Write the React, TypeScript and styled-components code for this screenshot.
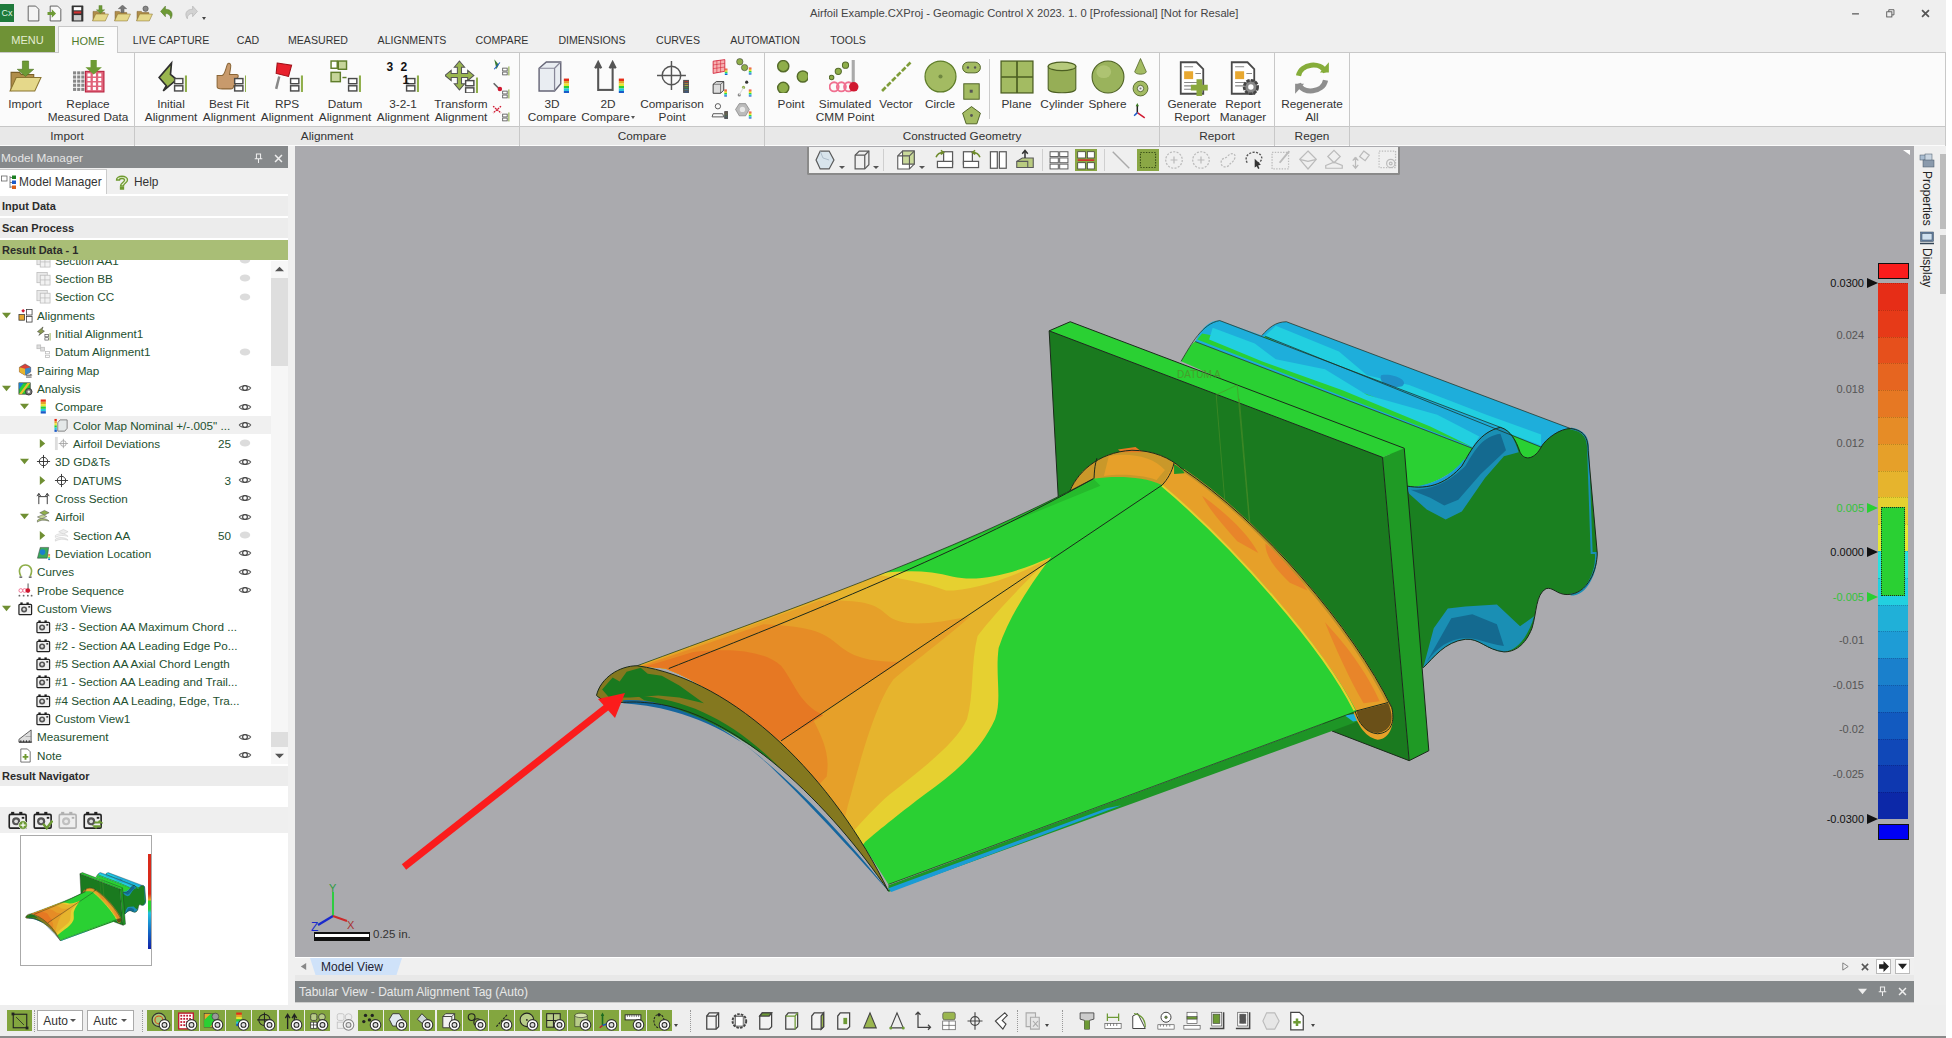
import React from "react";
import styled, { createGlobalStyle } from "styled-components";

const GlobalStyle = createGlobalStyle`
  html, body { margin: 0; padding: 0; background: #fff; }
  body { font-family: "Liberation Sans", Arial, sans-serif; }
`;

const Page = styled.div`
  width: 1946px; height: 1038px; display: flex; flex-direction: column; overflow: hidden;
  background: #efefef; color: #222; font-size: 12px;
`;
/* ---------- title bar ---------- */
const TitleBar = styled.div`
  height: 26px; flex: none; display: grid; grid-template-columns: 810px 1fr auto; align-items: center; background: #efefef;
`;
const Qat = styled.div`display: flex; align-items: center; height: 100%;`;
const QatBtn = styled.span<{ $w: number }>`
  width: ${p => p.$w}px; display: flex; justify-content: center; align-items: center;
`;
const AppLogo = styled.span`
  width: 14px; height: 18px; background: #1f7a3c; color: #dff3e3; font-size: 9px; display: flex;
  align-items: center; justify-content: center; margin-right: 8px;
`;
const TitleText = styled.div`font-size: 11.2px; color: #444; white-space: nowrap;`;
const WinControls = styled.div`display: flex; padding-right: 3px;`;
const WinBtn = styled.span`width: 35px; height: 16px; display: flex; align-items: center; justify-content: center;`;
/* ---------- tabs ---------- */
const TabBar = styled.div`
  height: 26px; flex: none; display: flex; align-items: flex-end; border-bottom: 1px solid #c8c8c8; background: #efefef;
`;
const MenuTab = styled.div`
  width: 55px; height: 26px; background: #6f9236; color: #e4edd2; display: flex; align-items: center;
  justify-content: center; font-size: 11px; margin-right: 3px; padding-top: 1px; box-sizing: border-box;
`;
const HomeTab = styled.div`
  width: 60px; background: #fbfbfb; border: 1px solid #c8c8c8; border-bottom: 0; color: #4f7a2a;
  display: flex; align-items: center; justify-content: center; font-size: 11px; box-sizing: border-box;
  margin-bottom: -1px; height: 27px; padding-top: 1px;
`;
const TabLabel = styled.div<{ $w: number }>`
  width: ${p => p.$w}px; height: 26px; display: flex; align-items: center; justify-content: center; font-size: 10.6px;
  color: #333; white-space: nowrap; padding-top: 2px; box-sizing: border-box;
`;
/* ---------- ribbon ---------- */
const Ribbon = styled.div`
  display: flex; height: 93px; flex: none; background: #fbfbfb; border-right: 1px solid #c8c8c8; box-sizing: border-box;
`;
const RibbonGroup = styled.div<{ $w: number }>`
  width: ${p => p.$w}px; flex: none; display: flex; flex-direction: column; box-sizing: border-box;
  border-right: 1px solid #c8c8c8;
`;
const GroupBody = styled.div<{ $pad?: number }>`
  height: 73px; display: flex; padding-left: ${p => p.$pad ?? 0}px; border-bottom: 1px solid #c6c6c6;
`;
const GroupLabel = styled.div`
  height: 18px; background: #e8e8e8; font-size: 11.8px; color: #333; display: flex; align-items: center; justify-content: center;
`;
const RibbonFill = styled.div`flex: 1; display: flex; flex-direction: column;`;
const FillBody = styled.div`height: 73px; border-bottom: 1px solid #c6c6c6;`;
const FillLabel = styled.div`height: 18px; background: #e8e8e8;`;
const RibbonBtn = styled.div<{ $w: number }>`
  width: ${p => p.$w}px; flex: none; display: flex; flex-direction: column; align-items: center; padding-top: 7px;
  box-sizing: border-box; font-size: 11.8px; line-height: 13px; color: #333;
`;
const BtnIcon = styled.div`height: 38px; display: flex; align-items: flex-start; justify-content: center;`;
const BtnText = styled.div`white-space: nowrap; text-align: center; width: 0; display: flex; flex-direction: column; align-items: center;`;
const Caret = styled.i`
  display: inline-block; width: 0; height: 0; border-left: 2.5px solid transparent; border-right: 2.5px solid transparent;
  border-top: 3px solid #555; margin-left: 1px; vertical-align: middle;
`;
const SmallCol = styled.div<{ $w: number }>`
  width: ${p => p.$w}px; flex: none; display: flex; flex-direction: column; align-items: center; gap: 5px; padding-top: 5px;
`;
const RibbonSep = styled.div`width: 1px; height: 60px; background: #ccc; margin: 6px 4.5px 0 8px; flex: none;`;
/* ---------- main ---------- */
const Main = styled.div`flex: 1; display: flex; min-height: 0;`;
const LeftPanel = styled.div`
  width: 295px; flex: none; display: flex; flex-direction: column; background: #f0f0f0; box-sizing: border-box; padding-right: 7px;
`;
const PanelHead = styled.div`
  height: 22px; flex: none; background: #86898b; color: #e5e5e5; display: flex; align-items: center; padding: 2px 0 0 1px; font-size: 11.8px; box-sizing: border-box;
`;
const PanelHeadTitle = styled.span`flex: 1;`;
const PanelHeadBtn = styled.span`width: 20px; display: flex; justify-content: center;`;
const PanelTabs = styled.div`height: 26px; flex: none; display: flex; align-items: flex-end; background: #f0f0f0;`;
const PanelTabActive = styled.div`
  width: 107px; height: 25px; background: #fff; border: 1px solid #ccc; border-bottom: 0; border-left: 0; box-sizing: border-box;
  display: flex; align-items: center; gap: 2px; padding-left: 1px; font-size: 11.9px; color: #333;
`;
const PanelTab = styled.div`height: 25px; display: flex; align-items: center; gap: 4px; padding-left: 7px; font-size: 11.9px; color: #333;`;
const PanelWhite = styled.div`flex: 1; display: flex; flex-direction: column; background: #fff; min-height: 0;`;
const AccHead = styled.div<{ $on?: boolean }>`
  height: 20px; margin-top: 2px; flex: none; background: ${p => (p.$on ? "#a9be76" : "#ececec")}; font-weight: bold; font-size: 11px;
  display: flex; align-items: center; padding-left: 2px; color: #2b2b2b;
`;
const TreeArea = styled.div`height: 504px; flex: none; display: flex; overflow: hidden;`;
const TreeList = styled.div`flex: 1; min-width: 0; margin-top: -9px;`;
const Row = styled.div<{ $sel?: boolean }>`
  height: 18.33px; display: flex; align-items: center; background: ${p => (p.$sel ? "#f0f0f0" : "transparent")}; color: #24502f;
  font-size: 11.7px; white-space: nowrap;
`;
const Twist = styled.span<{ $left: number }>`
  width: 16px; margin-left: ${p => p.$left}px; flex: none; display: flex; justify-content: center;
`;
const RowIcon = styled.span`width: 18px; flex: none; display: flex; justify-content: center; margin: 0 3px 0 2px;`;
const RowText = styled.span`flex: 1; min-width: 0;`;
const RowCount = styled.span`width: 20px; text-align: right; margin-right: 3px; flex: none;`;
const RowEye = styled.span`width: 22px; display: flex; justify-content: center; flex: none; margin-right: 15px;`;
const Scroll = styled.div`width: 17px; flex: none; display: flex; flex-direction: column; background: #dedede; margin-top: 1px;`;
const ScrollBtn = styled.div`height: 17px; background: #f7f7f7; display: flex; align-items: center; justify-content: center; flex: none;`;
const ScrollTop = styled.div`height: 88px; flex: none;`;
const ScrollThumb = styled.div`flex: 1; background: #f6f6f6;`;
const ScrollEnd = styled.div`height: 15px; flex: none;`;
const NavBar = styled.div`height: 21px; background: #fff; flex: none;`;
const CamBar = styled.div`height: 26px; flex: none; background: #efefef; display: flex; align-items: center; padding-left: 8px; gap: 5px;`;
const ThumbArea = styled.div`flex: 1; padding: 2px 0 0 20px; background: #fff;`;
const Thumb = styled.div`
  width: 132px; height: 131px; border: 1px solid #aaa; box-sizing: border-box; background: #fff; position: relative; overflow: hidden;
`;
const ThumbScale = styled.div`
  position: absolute; right: 0; top: 18px; width: 3px; height: 95px;
  background: linear-gradient(#d92a1a 0 42%, #e6a029 48%, #2ad033 50% 58%, #22c0e0 62%, #1470c8 80%, #1020a8 100%);
`;
const Center = styled.div`width: 1619px; flex: none; display: flex; flex-direction: column;`;
const Viewport = styled.div`flex: 1; position: relative; background: #aaaaae; overflow: hidden; border-bottom: 1px solid #fff;`;
const ModelSvg = styled.svg`position: absolute; left: 0; top: 0; width: 1619px; height: 811px;`;
const ViewBar = styled.div`
  position: absolute; left: 512px; top: 1px; width: 593px; height: 28px; box-sizing: border-box; background: #efefef;
  border: 2px solid #8a8a8a; border-top: 0; border-radius: 0 0 2px 2px; display: flex; align-items: center; padding-left: 3px;
`;
const ViewBtn = styled.span<{ $w: number; $on?: boolean }>`
  width: ${p => p.$w}px; height: 24px; flex: none; display: flex; align-items: center; justify-content: center;
`;
const MiniDrop = styled.span`
  width: 0; height: 0; border-left: 3px solid transparent; border-right: 3px solid transparent; border-top: 3px solid #555; margin-top: 14px;
`;
const ViewSep = styled.span<{ $r?: number }>`width: 1px; height: 22px; background: #cfcfcf; margin: 0 ${p => p.$r ?? 5}px 0 4px; flex: none;`;
const CornerMark = styled.span`
  position: absolute; right: 4px; top: 4px; width: 0; height: 0; border-top: 5px solid #fff; border-left: 7px solid transparent;
`;
const Legend = styled.div`position: absolute; left: 1583px; top: 117px; width: 31px;`;
const LegendCap = styled.div<{ $c: string }>`background: ${p => p.$c}; border: 1px solid #111; box-sizing: border-box; height: 16px;`;
const LegendBands = styled.div`height: 536px; margin: 4px 0 5px; display: flex; flex-direction: column; position: relative; width: 30px;`;
const Band = styled.div<{ $c: string }>`flex: 1; background: ${p => p.$c}; border-top: 1px dotted rgba(0,0,0,.18);`;
const TolBox = styled.div`
  position: absolute; left: 3px; top: 224px; width: 24px; height: 89px; background: #2ad033; border: 1px dotted #222; box-sizing: border-box;
`;
const Tick = styled.div<{ $c: string }>`
  position: absolute; right: 44px; width: 50px; height: 14px; line-height: 14px; margin-top: -7px; text-align: right; font-size: 11px;
  color: ${p => p.$c};
`;
const Pointer = styled.div<{ $c: string }>`
  position: absolute; left: -11px; width: 0; height: 0; margin-top: -5px;
  border-top: 5px solid transparent; border-bottom: 5px solid transparent; border-left: 11px solid ${p => p.$c};
`;
const ScaleLabel = styled.div`position: absolute; left: 78px; top: 782px; font-size: 11.5px; color: #333;`;
const ScaleBar = styled.div`
  position: absolute; left: 19px; top: 786px; width: 56px; height: 9px; box-sizing: border-box;
  border: 1px solid #111; border-width: 2px 1px 4px; background: #fff;
`;
const TabRow = styled.div`height: 17px; flex: none; background: #f0f0f0; display: flex; align-items: center; padding: 0 4px; gap: 4px;`;
const ModelTab = styled.div`
  width: 92px; height: 17px; background: #cfe2f9; clip-path: polygon(0 0, 100% 0, 94% 100%, 6% 100%); box-sizing: border-box; padding-right: 8px;
  margin-left: -2px; display: flex; align-items: center; justify-content: center; font-size: 12px; color: #223;
`;
const TabRowFill = styled.div`flex: 1;`;
const TabRowBtn = styled.span<{ $boxed?: boolean }>`
  width: 15px; height: 15px; display: flex; align-items: center; justify-content: center; color: #555; font-size: 12px; box-sizing: border-box;
  border: ${p => (p.$boxed ? "1px solid #bbb" : "0")}; background: ${p => (p.$boxed ? "#fff" : "transparent")};
`;
const GapRow = styled.div`height: 6px; flex: none; background: #e8e8e8;`;
const TabHead = styled.div`
  height: 22px; flex: none; background: #84888a; color: #e8e8e8; font-size: 12px; display: flex; align-items: center; padding-left: 4px; padding-right: 2px;
  border-bottom: 1px solid #ccc; box-sizing: border-box;
`;
const TabHeadTitle = styled.span`flex: 1;`;
const TabHeadBtn = styled.span`width: 20px; display: flex; justify-content: center;`;
const TabStub = styled.div`height: 2px; flex: none; background: #efefef;`;
const RightRail = styled.div`flex: 1; background: #efefef; position: relative; display: flex; flex-direction: column; padding-top: 7px;`;
const RailItem = styled.div`display: flex; flex-direction: column; align-items: center; width: 26px; margin-bottom: 4px;`;
const RailText = styled.span`writing-mode: vertical-rl; font-size: 12px; color: #222; margin-top: 2px; line-height: 14px;`;
const RailBar = styled.div<{ $top: number; $h: number }>`
  position: absolute; right: 0; top: ${p => p.$top}px; width: 6px; height: ${p => p.$h}px; background: #bdbdbd;
`;
/* ---------- bottom toolbar ---------- */
const BottomBar = styled.div`
  height: 33px; flex: none; background: #eee; border-bottom: 2px solid #8a8a8a; box-sizing: border-box; display: flex; align-items: center; padding-left: 7px;
`;
const SelectBox = styled.div<{ $w: number }>`
  width: ${p => p.$w}px; height: 21px; background: #fff; border: 1px solid #aaa; box-sizing: border-box; font-size: 12px; display: flex;
  align-items: center; padding-left: 5px; color: #333; margin-right: 4px; position: relative; flex: none;
`;
const SelectArrow = styled.span`
  position: absolute; right: 6px; top: 8px; width: 0; height: 0; border-left: 3px solid transparent; border-right: 3px solid transparent; border-top: 3px solid #555;
`;
const GreenTile = styled.span<{ $off?: boolean }>`
  width: 25px; height: 21px; flex: none; margin-right: 1.3px; background: ${p => (p.$off ? "#f0f0f0" : "#83a63f")}; display: flex; align-items: center; justify-content: center;
  position: relative; opacity: ${p => (p.$off ? 0.55 : 1)};
`;
const TileEye = styled.span`position: absolute; right: 1px; bottom: 0; display: flex;`;
const OutlineBtn = styled.span<{ $w: number }>`width: ${p => p.$w}px; flex: none; display: flex; justify-content: center; align-items: center;`;
const BarDots = styled.span<{ $m: number }>`width: 1px; height: 22px; border-left: 1px dotted #999; margin: 0 ${p => p.$m}px; flex: none;`;
const Drop = styled.span`
  width: 0; height: 0; border-left: 2.5px solid transparent; border-right: 2.5px solid transparent; border-top: 3px solid #444; margin: 10px 4px 0 1px; flex: none;
`;
const BarSvg = styled.svg`display: block; flex: none;`;

/* ---------- icon helpers ---------- */
const Ico: React.FC<{ s?: number; vb?: string; children: React.ReactNode }> = ({ s = 16, vb = "0 0 32 32", children }) => (
  <BarSvg width={s} height={s} viewBox={vb}>{children}</BarSvg>
);
const G = "#8fae4a", GD = "#5f7d2a", D = "#4a4a4a", L = "#e9edf2";
const Badge = () => (
  <g fill="#fff" stroke={D} strokeWidth="1.4">
    <rect x="19" y="18" width="8" height="5" /><rect x="19" y="25" width="8" height="5" />
    <rect x="29" y="15" width="2" height="16" fill={G} stroke="none" />
  </g>
);
const Rainbow: React.FC<{ x?: number; y?: number; w?: number; h?: number }> = ({ x = 27, y = 18, w = 5, h = 2.4 }) => (
  <g>{["#e62d17", "#e6a029", "#e8e832", "#2ad033", "#22c8e0", "#1a5ac8"].map((c, i) => <rect key={c} x={x} y={y + i * h} width={w} height={h} fill={c} />)}</g>
);
const Folder = ({ dir = "down" }: { dir?: string }) => (
  <g>
    <path d="M2 12h8l2 2h12v5H8L2 30z" fill="#b08d4a" stroke="#7a5f28" />
    <path d="M7 17h24l-6 13H1z" fill="#e5d88a" stroke="#8a7430" />
    {dir === "down" && <path d="M13 1h6v8h5l-8 7-8-7h5z" fill="#6d9a35" stroke="#4e7322" strokeWidth=".6" />}
    {dir === "up" && <path d="M16 0l8 7h-5v7h-6V7H8z" fill="#777" stroke="#444" strokeWidth=".6" />}
    {dir === "gear" && <circle cx="18" cy="7" r="5" fill="#888" stroke="#444" />}
  </g>
);
const Doc = ({ c = "#fff" }: { c?: string }) => <path d="M6 2h14l6 6v22H6z" fill={c} stroke={D} strokeWidth="1.6" />;
const EyeOn = () => (
  <Ico s={14}><path d="M3 16c4-7 22-7 26 0-4 7-22 7-26 0z" fill="#eee" stroke="#555" strokeWidth="2.4" /><circle cx="16" cy="16" r="5.4" fill="#fff" stroke="#444" strokeWidth="2.6" /></Ico>
);
const EyeOff = () => <Ico s={14}><ellipse cx="16" cy="16" rx="12" ry="8" fill="#dcdcdc" /></Ico>;
const TileEyeIco = () => (
  <Ico s={13}><circle cx="16" cy="17" r="13" fill="#fff" stroke="#333" strokeWidth="2.6" /><circle cx="16" cy="17" r="6" fill="#ddd" stroke="#222" strokeWidth="2.6" /></Ico>
);
const Twisty: React.FC<{ open?: boolean }> = ({ open }) => (
  <Ico s={9} vb="0 0 10 10">{open ? <path d="M0 2h10L5 8z" fill="#6f8f33" /> : <path d="M2 0l6 5-6 5z" fill="#6f8f33" />}</Ico>
);
const Cam = ({ op = 1 }: { op?: number }) => (
  <g opacity={op}><rect x="2" y="7" width="27" height="22" rx="2" fill="#eee" stroke="#222" strokeWidth="2.6" /><rect x="5" y="3" width="5" height="4" fill="#222" /><rect x="18" y="3" width="5" height="4" fill="#222" /><circle cx="13" cy="18" r="6.5" fill="#555" /><circle cx="13" cy="18" r="3" fill="#ddd" /><rect x="22" y="11" width="4" height="3" fill="#222" /></g>
);
const SectionGrid = () => (<g fill="#e9e9e9" stroke="#bbb" strokeWidth="1.6"><rect x="2" y="3" width="22" height="22" /><rect x="9" y="9" width="21" height="21" fill="#f2f2f2" /><path d="M19 9v21M9 19h21" /></g>);

const icons: Record<string, React.ReactNode> = {
  importI: <Folder />,
  replace: <g><g fill="#888">{[0, 1, 2, 3, 4].map(r => [0, 1, 2].map(c => <rect key={`${r}${c}`} x={1 + c * 4} y={11 + r * 4} width="3" height="3" />))}</g><rect x="13" y="11" width="18" height="20" fill="#e0637a" stroke="#b81f3c" /><g fill="#fff">{[0, 1, 2, 3].map(r => [0, 1, 2].map(c => <rect key={`${r}${c}`} x={15 + c * 5.2} y={13 + r * 4.4} width="3" height="3" />))}</g><path d="M18 0h6v7h5l-8 7-8-7h5z" fill="#6d9a35" /></g>,
  initial: <g><path d="M16 3L4 17l7 8-3 5 13-11-6-5z" fill="#9ab64f" stroke="#2f2f2f" strokeWidth="1.6" /><Badge /></g>,
  bestfit: <g><path d="M4 15h5c3-2 3-6 5-11 2-2 4 0 3 4l-1 6h7c2 0 2 3 0 4 1 1 1 3-1 4 0 2-1 3-2 3 0 2-1 3-3 3H9c-3 0-5 0-5-2z" fill="#c89a6c" stroke="#8a6536" strokeWidth="1" /><g transform="translate(2,0)"><Badge /></g></g>,
  rps: <g><path d="M6 3l14 2-3 11-12-3z" fill="#e8202c" stroke="#a01018" /><path d="M8 16l-3 12" stroke="#888" strokeWidth="2.4" /><Badge /></g>,
  datum: <g fill="#c6d59a" stroke={GD} strokeWidth="1.4"><rect x="9" y="1" width="8" height="8" /><rect x="2" y="1" width="6" height="7" fill="#fff" /><rect x="2" y="12" width="9" height="9" /><path d="M13 17h4" fill="none" /><Badge /></g>,
  three21: <g><Badge /></g>,
  transform: <g><path d="M14 1l5 6h-3v6h6v-3l6 5-6 5v-3h-6v6h3l-5 6-5-6h3v-6H6v3L0 15l6-5v3h6V7H9z" fill="#9ab64f" stroke="#555" strokeWidth="1" /><g transform="translate(1,2)"><Badge /></g></g>,
  comp3d: <g><path d="M3 8l7-6h14v21l-6 7H3z" fill={L} stroke="#667" strokeWidth="1.4" /><path d="M3 8h15v22M18 8l6-6" fill="none" stroke="#889" strokeWidth="1.2" /><Rainbow /></g>,
  comp2d: <g><path d="M6 30V4m-3 4l3-6 3 6M20 30V4m-3 4l3-6 3 6" stroke="#555" strokeWidth="2" fill="#555" /><path d="M6 29h14" stroke="#555" strokeWidth="2" /><Rainbow x={26} /></g>,
  compPt: <g fill="none" stroke="#555" strokeWidth="1.4"><circle cx="15" cy="15" r="9" /><path d="M15 1v28M1 15h28M15 11v8M11 15h8" /><Rainbow x={27} y={20} w={5} h={2} /></g>,
  point: <g fill="#8fae4a" stroke="#556b2a" strokeWidth="1.4"><circle cx="8" cy="6" r="5.4" /><circle cx="27" cy="16" r="5.4" /><circle cx="8" cy="27" r="5.4" /></g>,
  cmm: <g><g fill={G} stroke="#556b2a"><circle cx="16" cy="5" r="3" /><circle cx="9" cy="11" r="3" /><circle cx="2.5" cy="17" r="2.2" /></g><rect x="22" y="0" width="3" height="24" fill="#aaa" /><g fill="none" stroke="#f07090" strokeWidth="1.8"><circle cx="5" cy="26" r="4.4" /><circle cx="12" cy="26" r="4.4" /><circle cx="19" cy="26" r="4.4" /></g><circle cx="24" cy="26" r="4.6" fill="#d01830" /></g>,
  vector: <path d="M2 30L30 2" stroke="#7f9d3a" strokeWidth="2.6" strokeDasharray="5 1.8" />,
  circleI: <g><circle cx="16" cy="16" r="15" fill="#a3bb62" stroke="#5f7d2a" strokeWidth="1.2" /><circle cx="16" cy="16" r="2" fill="#6f8740" /></g>,
  plane: <g fill="#a3bb62" stroke="#4c5f22" strokeWidth="1.2"><rect x="1" y="1" width="30" height="30" /><path d="M16 1v30M1 16h30" strokeWidth="1.6" /></g>,
  cyl: <g><path d="M3 6v21c0 5 26 5 26 0V6z" fill="#96ae56" stroke="#4c5f22" /><ellipse cx="16" cy="6" rx="13" ry="4" fill="#b6ca7c" stroke="#4c5f22" /></g>,
  sphere: <g><circle cx="16" cy="16" r="15" fill="#9ab35c" stroke="#4c5f22" /><ellipse cx="12" cy="11" rx="7" ry="6" fill="#b6ca7c" opacity=".7" /></g>,
  genRep: <g><Doc /><rect x="9" y="10" width="8" height="7" fill="#e8a830" /><g stroke="#888"><path d="M9 6h8M19 12h5M9 20h14M9 23h14M9 26h12" /></g><path d="M20 17h5v5h5v5h-5v5h-5v-5h-5v-5h5z" fill="#8aa83e" /></g>,
  repMgr: <g><Doc /><rect x="9" y="10" width="8" height="7" fill="#e8a830" /><g stroke="#888"><path d="M9 6h8M19 12h5M9 20h14M9 23h14" /></g><circle cx="23" cy="24" r="6" fill="#888" stroke="#444" strokeWidth="2.4" strokeDasharray="3 1" /><circle cx="23" cy="24" r="2.4" fill="#fff" /></g>,
  regen: <g fill="none" strokeWidth="4.6"><path d="M4 14C6 3 24 1 28 11" stroke="#86ad3a" /><path d="M28 18c-2 11-20 13-24 3" stroke="#8e8e8e" /><path d="M23 11h8V2z" fill="#86ad3a" stroke="none" /><path d="M9 21H1v9z" fill="#8e8e8e" stroke="none" /></g>,
  cone: <g><path d="M16 1L5 26c2 6 20 6 22 0z" fill="#a3bb62" stroke="#4c5f22" strokeWidth="1.4" /></g>,
  torus: <g><circle cx="16" cy="16" r="14" fill="#a3bb62" stroke="#4c5f22" strokeWidth="1.6" /><circle cx="16" cy="16" r="6" fill="#eee" stroke="#4c5f22" strokeWidth="1.6" /><circle cx="16" cy="16" r="2" fill="#777" /></g>,
  slot: <g><rect x="1" y="7" width="30" height="18" rx="9" fill="#a3bb62" stroke="#4c5f22" strokeWidth="1.6" /><circle cx="10" cy="16" r="2" fill="#555" /><circle cx="22" cy="16" r="2" fill="#555" /></g>,
  square: <g><rect x="3" y="3" width="26" height="26" fill="#a3bb62" stroke="#4c5f22" strokeWidth="1.6" /><rect x="13" y="13" width="5" height="5" fill="#555" /></g>,
  penta: <g><path d="M16 1l15 11-6 18H7L1 12z" fill="#a3bb62" stroke="#4c5f22" strokeWidth="1.6" /><circle cx="16" cy="16" r="2.4" fill="#555" /></g>,
  triadS: <g strokeWidth="2.8" fill="none"><path d="M10 6v14" stroke="#222" /><path d="M10 20l14 10" stroke="#d01830" /><path d="M10 20l-6 6" stroke="#1a5ac8" /><path d="M10 2l-3 6h6z" fill="#3a7a20" stroke="none" /></g>,
  alignS1: <g><path d="M4 2l8 10-4 8z" fill="#3a7a30" /><path d="M4 20l10-12" stroke="#1a5ac8" strokeWidth="2" /><Badge /></g>,
  alignS2: <g><path d="M3 4l12 12" stroke="#666" strokeWidth="3" /><circle cx="14" cy="14" r="4" fill="#d01830" /><Badge /></g>,
  alignS3: <g><path d="M2 4l14 12M16 4L2 16" stroke="#d01830" strokeWidth="2.4" strokeDasharray="3 1.5" /><Badge /></g>,
  csMesh: <g><path d="M4 6l22-3v22L4 29z" fill="#f6b0b0" stroke="#d01830" strokeWidth="1.5" /><path d="M4 13l22-3M4 20l22-3M11 5v23M18 4v23" stroke="#d01830" strokeWidth="1" /><Rainbow x={26} y={20} h={2} w={5} /></g>,
  csCyl: <g><circle cx="9" cy="7" r="6" fill="#8fae4a" stroke="#333" /><circle cx="18" cy="18" r="6" fill="#8fae4a" stroke="#333" /><Rainbow x={26} y={18} h={2.2} w={5} /></g>,
  csCube: <g><path d="M4 8l6-5h14v16l-6 6H4z" fill="#ddd" stroke="#222" strokeWidth="1.6" /><path d="M4 8h14v17M18 8l6-5" fill="none" stroke="#222" /><Rainbow x={25} y={18} h={2.2} w={5} /></g>,
  csDots: <g fill="#888"><circle cx="8" cy="28" r="3" /><circle cx="16" cy="14" r="3" fill={G} /><circle cx="22" cy="4" r="3" fill="#333" /><path d="M8 28L16 14" stroke="#ddd" strokeWidth="2" /><Rainbow x={26} y={18} h={2.2} w={5} /></g>,
  csPerson: <g fill="none" stroke="#555" strokeWidth="1.8"><circle cx="13" cy="8" r="5" /><path d="M4 22h18l2 6H2z" /><Rainbow x={26} y={18} h={2.2} w={5} /></g>,
  csHex: <g><path d="M8 3h12l7 11-7 12H8L1 14z" fill="#bbb" stroke="#666" /><circle cx="14" cy="14" r="5" fill="#e8e8e8" /><Rainbow x={26} y={18} h={2.2} w={5} /></g>,
  tAlign: <g><path d="M11 2l4 4-4 4-4-4z" fill="#d01830" /><rect x="2" y="14" width="12" height="12" fill="#e8a830" stroke="#333" strokeWidth="1.6" /><rect x="18" y="3" width="12" height="12" fill="#fff" stroke="#333" strokeWidth="1.6" /><rect x="18" y="18" width="12" height="12" fill="#fff" stroke="#333" strokeWidth="1.6" /></g>,
  tInit: <g><path d="M15 2L3 12l6 3-3 5 12-9-5-3z" fill="#8a9a50" stroke="#333" /><Badge /></g>,
  tDatum: <g fill="#ddd" stroke="#bbb" strokeWidth="1.6"><rect x="2" y="2" width="8" height="8" /><rect x="10" y="7" width="8" height="8" /><rect x="20" y="16" width="9" height="5" fill="#fff" /><rect x="20" y="24" width="9" height="5" fill="#fff" /></g>,
  tPair: <g><path d="M3 9l12-7 12 7v10l-12 7-12-7z" fill="#d8423a" stroke="#333" strokeWidth="1" /><path d="M15 12L27 9v10l-12 7z" fill="#3a8ac8" /><path d="M3 9l12 3v14l-12-7z" fill="#e6b42d" /><path d="M17 26h12M29 26l-3-3M17 30h12" stroke="#333" strokeWidth="1.8" /></g>,
  tAnal: <g><rect x="2" y="4" width="24" height="24" fill="#2ad033" stroke="#333" strokeWidth="1.6" /><path d="M2 28L20 4h6L8 28z" fill="#e8c030" /><path d="M2 4h10L2 18z" fill="#1a80cc" /><circle cx="23" cy="23" r="7" fill="#777" stroke="#222" strokeWidth="1.5" /><circle cx="23" cy="23" r="2.6" fill="#eee" /></g>,
  tComp: <g><Rainbow x={10} y={1} w={11} h={5} /></g>,
  tMap: <g><Rainbow x={1} y={2} w={5} h={4.6} /><path d="M8 10l5-6h15v18l-5 6H8z" fill="#e4e8e8" stroke="#666" strokeWidth="1.6" /></g>,
  tDev: <g><rect x="2" y="2" width="6" height="28" fill="#ddd" /><g fill="none" stroke="#999" strokeWidth="1.6"><circle cx="20" cy="16" r="6" /><path d="M20 6v20M10 16h20" /></g></g>,
  tGdt: <g fill="none" stroke="#333" strokeWidth="2"><circle cx="16" cy="16" r="9" /><path d="M16 2v28M2 16h28" /></g>,
  tCross: <g fill="none" stroke="#333" strokeWidth="2"><path d="M6 28V6m-4 5l4-6 4 6M24 28V6m-4 5l4-6 4 6M6 12h18" /></g>,
  tAirfoil: <g><path d="M8 8l10-5 10 5-10 5z" fill="#8fae4a" stroke="#444" /><path d="M3 17l12-5 8 4-11 5z" fill="#c6d59a" stroke="#444" /><path d="M3 24c4-5 20-5 25 2-10-3-18-3-25 2z" fill="#aac070" stroke="#444" /></g>,
  tSecAA: <g opacity=".5"><path d="M10 8l10-5 10 5-10 5z" fill="#ddd" stroke="#888" /><path d="M3 16c5-5 22-5 27 2-10-3-18-3-27 2z" fill="#eee" stroke="#888" /><path d="M3 24c5-5 22-5 27 2-10-3-18-3-27 2z" fill="#ddd" stroke="#888" /></g>,
  tDevLoc: <g><path d="M3 26L9 3h18l-3 23z" fill="#3aa85a" stroke="#333" /><circle cx="14" cy="13" r="6" fill="#1a80cc" /><Rainbow x={26} y={18} h={2} w={4} /></g>,
  tCurves: <g fill="none" stroke="#444" strokeWidth="2"><path d="M6 26C-2 10 8 2 16 2s18 8 10 24" stroke={G} strokeWidth="3.4" /><path d="M3 28h6M23 28h6" strokeWidth="3" /></g>,
  tProbe: <g><rect x="20" y="1" width="3" height="20" fill="#888" /><g fill="none" stroke="#f07090" strokeWidth="2"><circle cx="6" cy="16" r="4" /><circle cx="14" cy="16" r="4" /></g><circle cx="21" cy="16" r="5" fill="#d01830" /><g fill="#666"><circle cx="3" cy="27" r="2" /><circle cx="12" cy="27" r="2" /><circle cx="21" cy="27" r="2" /><circle cx="29" cy="27" r="2" /></g></g>,
  tCam: <Cam />,
  tMeas: <g><path d="M2 22L28 2v26H2z" fill="#ddd" stroke="#333" strokeWidth="1.6" /><path d="M2 28h28M6 24v4M12 24v4M18 24v4M24 24v4" stroke="#222" strokeWidth="1.8" /><path d="M16 16h12" stroke="#777" /></g>,
  tNote: <g><Doc /><path d="M14 13h4v4h4v4h-4v4h-4v-4h-4v-4h4z" fill="#6f9a30" /></g>,
  tabMM: <g><rect x="1" y="4" width="11" height="10" fill="#fff" stroke="#666" strokeWidth="1.6" /><path d="M18 4v24M18 7h4M18 17h4M18 26h4" stroke="#666" strokeWidth="1.6" /><rect x="22" y="3" width="8" height="7" fill="#1a8020" /><rect x="22" y="13" width="8" height="7" fill="#1a5ac8" /><rect x="22" y="23" width="8" height="7" fill="#d8601a" /></g>,
  help: <g fill="none" stroke="#6f9a30" strokeWidth="2.6"><path d="M5 12C4 2 28 2 27 12c0 6-8 6-8 12h-6c0-7 8-7 8-12 0-4-10-4-10 0z" fill="#e4efcf" /><path d="M13 27h6v3h-6z" fill="#e4efcf" /></g>,
  pin: <g fill="none" stroke="#eee" strokeWidth="3"><path d="M10 3h12v14H10zM5 17h22M16 17v12" /></g>,
  x: <path d="M6 6l20 20M26 6L6 26" stroke="#eee" strokeWidth="4.5" />,
  xd: <path d="M6 6l20 20M26 6L6 26" stroke="#555" strokeWidth="5" />,
  minus: <path d="M6 17h20" stroke="#666" strokeWidth="4" />,
  restore: <g fill="none" stroke="#555" strokeWidth="2.6"><rect x="5" y="11" width="15" height="15" /><path d="M11 11V5h15v15h-6" /></g>,
  docBlank: <Doc c="#f4f4f4" />,
  docIn: <g><Doc c="#f8f8f8" /><path d="M1 13h8V8l8 8-8 8v-5H1z" fill="#6d9a35" /></g>,
  save: <g><rect x="5" y="1" width="22" height="30" rx="1" fill="#333" /><rect x="9" y="4" width="14" height="6" fill="#fff" /><rect x="9" y="12" width="14" height="4" fill="#d03030" /><rect x="9" y="19" width="14" height="10" fill="#ccc" /></g>,
  folderIn: <Folder />,
  folderUp: <Folder dir="up" />,
  folderGear: <Folder dir="gear" />,
  undo: <path d="M12 2l-9 10 9 10v-6c6 0 10 3 10 10 6-9 2-18-10-18z" fill="#6d9a35" stroke="#4e7322" />,
  redo: <path d="M20 2l9 10-9 10v-6c-6 0-10 3-10 10-6-9-2-18 10-18z" fill="#d2d2d2" stroke="#aaa" />,
  camAdd: <g><Cam /><circle cx="24" cy="24" r="7" fill="#6d9a35" stroke="#fff" /><path d="M24 20v8M20 24h8" stroke="#fff" strokeWidth="2" /></g>,
  camChk: <g><Cam /><path d="M16 22l6 7 9-12" fill="none" stroke="#6d9a35" strokeWidth="4" /></g>,
  camOff: <Cam op={0.3} />,
  camArr: <g><Cam /><path d="M18 20h11l-4-3M29 26H18l4 3" fill="none" stroke="#6d9a35" strokeWidth="3" /></g>,
};
const I: React.FC<{ n: string; s?: number }> = ({ n, s }) => <Ico s={s}>{icons[n]}</Ico>;

/* ---------- viewport toolbar glyphs ---------- */
const stroke = "#5a5a5a";
const vb: Record<string, React.ReactNode> = {
  hex: <g><path d="M9 3h13l7 13-7 13H9L3 16z" fill="#d8e4ec" stroke={stroke} strokeWidth="1.8" /><path d="M9 3l4 10 9 3" fill="none" stroke="#9ab" /></g>,
  cube: <g fill="#efefef" stroke={stroke} strokeWidth="1.8"><path d="M6 9l6-6h14v20l-6 6H6z" /><path d="M6 9h14v20M20 9l6-6" fill="none" /></g>,
  cubeG: <g fill="#b9cb80" stroke={stroke} strokeWidth="1.6"><path d="M4 10l7-7h17v19l-7 7H4z" fill="#fff" /><path d="M11 3h17v19H11z" fill="#c9d99a" /><path d="M4 10h17v19M21 10l7-7" fill="none" /></g>,
  vL: <g fill="#fff" stroke={stroke} strokeWidth="1.8"><rect x="14" y="4" width="13" height="18" /><rect x="5" y="18" width="22" height="9" /><path d="M3 12c2-6 8-7 11-7m-4-3l4 3-4 3" fill="none" stroke="#6d8a2a" strokeWidth="2.2" /></g>,
  vR: <g fill="#fff" stroke={stroke} strokeWidth="1.8"><rect x="5" y="4" width="13" height="18" /><rect x="5" y="18" width="22" height="9" /><path d="M29 12c-2-6-8-7-11-7m4-3l-4 3 4 3" fill="none" stroke="#6d8a2a" strokeWidth="2.2" /></g>,
  vPair: <g fill="#fff" stroke={stroke} strokeWidth="1.8"><rect x="5" y="4" width="10" height="24" /><rect x="18" y="4" width="10" height="24" /></g>,
  vUp: <g stroke={stroke} strokeWidth="1.6"><path d="M4 18l8-5h16v14H4z" fill="#b9cb80" /><path d="M4 18h16v9" fill="none" /><path d="M16 13V3m-4 4l4-5 4 5" fill="none" stroke="#333" strokeWidth="2.2" /></g>,
  grid6: <g fill="#fff" stroke={stroke} strokeWidth="1.4"><rect x="3" y="4" width="12" height="7" /><rect x="17" y="4" width="12" height="7" /><rect x="3" y="13" width="12" height="7" /><rect x="17" y="13" width="12" height="7" /><rect x="3" y="22" width="12" height="7" /><rect x="17" y="22" width="12" height="7" /></g>,
  greenSel: <g><rect width="32" height="32" fill="#8aa745" /><rect x="4" y="4" width="11" height="9" fill="#fff" stroke="#333" /><rect x="18" y="4" width="10" height="9" fill="#fff" stroke="#333" /><rect x="4" y="15" width="24" height="2.4" fill="#d03030" /><rect x="4" y="20" width="11" height="9" fill="#fff" stroke="#333" /><rect x="18" y="20" width="10" height="9" fill="#fff" stroke="#333" /></g>,
  fLine: <path d="M4 4l24 24" stroke="#aaa" strokeWidth="2" />,
  greenBox: <g><rect width="32" height="32" fill="#8aa745" /><rect x="5" y="5" width="22" height="22" fill="none" stroke="#3a5018" strokeWidth="1.6" strokeDasharray="2 2" /></g>,
  fCirc: <g fill="none" stroke="#bbb" strokeWidth="1.8" strokeDasharray="3 2"><circle cx="16" cy="16" r="12" /><path d="M16 11v10M11 16h10" strokeDasharray="none" /></g>,
  fBlob: <path d="M6 20c0-8 6-5 10-10s12-4 10 3-6 6-8 10-12 5-12-3z" fill="none" stroke="#bbb" strokeWidth="1.8" strokeDasharray="3 2" />,
  fLasso: <g fill="none" stroke="#555" strokeWidth="2"><path d="M6 20C0 8 14 2 22 6s6 12 0 14" strokeDasharray="3 2" /><path d="M17 14l9 9-4 1 2 4-2 1-2-4-3 2z" fill="#333" stroke="none" /></g>,
  fBrush: <g fill="none" stroke="#bbb" strokeWidth="1.8"><rect x="3" y="5" width="24" height="24" strokeDasharray="2 2" /><path d="M28 3L14 20" strokeWidth="2.8" /></g>,
  fDia1: <g fill="none" stroke="#bbb" strokeWidth="1.8"><path d="M16 3l12 12-12 14L4 15zM4 15l12 3 12-3" /></g>,
  fDia2: <g fill="none" stroke="#bbb" strokeWidth="1.8"><path d="M16 2l9 9-9 9-9-9zM4 24l12-5 12 5v4H4z" /></g>,
  fDia3: <g fill="none" stroke="#bbb" strokeWidth="1.8"><path d="M20 3l8 6-6 8-8-6zM8 12v16m-4-5l4 5 4-5M8 12L4 17M8 12l4 5" /></g>,
  fEye: <g fill="none" stroke="#bbb" strokeWidth="1.8"><rect x="3" y="3" width="24" height="24" strokeDasharray="2 2" /><circle cx="20" cy="21" r="6" /><circle cx="20" cy="21" r="2" /></g>,
  /* bottom outline glyphs */
  bCube: <g fill="#f2f2f2" stroke="#444" strokeWidth="2"><path d="M6 8l4-5h15v22l-4 4H6z" /><path d="M6 8h15v21M21 8l4-5" fill="none" /></g>,
  bGear: <g><circle cx="15" cy="16" r="11" fill="#bbb" stroke="#444" strokeWidth="3" strokeDasharray="4 2" /><rect x="9" y="9" width="12" height="15" fill="#fff" stroke="#444" /></g>,
  bCubeG: <g fill="#f2f2f2" stroke="#444" strokeWidth="2"><path d="M6 8l4-5h15v22l-4 4H6z" /><path d="M6 8h15l4-5H10z" fill="#6d9a35" /></g>,
  bCubeO: <g fill="#f2f2f2" stroke="#6d9a35" strokeWidth="2"><path d="M6 8l4-5h15v22l-4 4H6z" stroke="#444" /><path d="M6 8h15v21M21 8l4-5" fill="none" /></g>,
  bCubeR: <g fill="#f2f2f2" stroke="#444" strokeWidth="2"><path d="M6 8l4-5h15v22l-4 4H6z" /><path d="M21 8l4-5v22l-4 4z" fill="#9ab64f" /></g>,
  bCubeS: <g fill="#f2f2f2" stroke="#444" strokeWidth="2"><path d="M6 8l4-5h15v22l-4 4H6z" /><rect x="15" y="11" width="6" height="10" fill="#6d9a35" stroke="none" /></g>,
  bCone: <path d="M16 3L6 27h20z" fill="#9ab64f" stroke="#444" strokeWidth="1.8" />,
  bConeO: <g><path d="M16 3L6 27h20z" fill="none" stroke="#444" strokeWidth="1.8" /><circle cx="6" cy="27" r="2.4" fill="#6d9a35" /><circle cx="26" cy="27" r="2.4" fill="#6d9a35" /></g>,
  bCorner: <path d="M4 6l4-4 4 4M8 2v24h20m-4-4l4 4-4 4" fill="none" stroke="#444" strokeWidth="2" />,
  bCylGrid: <g><rect x="6" y="2" width="20" height="12" rx="3" fill="#9ab64f" stroke="#444" /><rect x="6" y="16" width="20" height="14" fill="#fff" stroke="#444" /><path d="M16 16v14M6 23h20" stroke="#444" /></g>,
  bTarget: <g fill="none" stroke="#444" strokeWidth="1.8"><circle cx="16" cy="16" r="7" /><path d="M16 2v28M4 16h24" /></g>,
  bChev: <path d="M22 3L7 16l12 13 5-8-6-6 8-8z" fill="#fff" stroke="#444" strokeWidth="1.8" />,
  bFade: <g fill="#e6e6e6" stroke="#aaa" strokeWidth="1.8"><path d="M5 3h15v22H5z" /><path d="M12 10h14v19H12z" /><path d="M16 16l8 9M24 16l-8 9" /></g>,
  bCal: <g><path d="M5 3h22v10l-7 2v14h-8V15L5 13z" fill="#ccc" stroke="#444" strokeWidth="1.4" /><rect x="12" y="15" width="8" height="14" fill="#6d9a35" /></g>,
  bDim: <g stroke="#444"><path d="M7 4v12M25 4v12M7 10h18" stroke="#6d9a35" strokeWidth="2" fill="none" /><rect x="3" y="20" width="26" height="8" fill="#fff" /><path d="M7 20v4M12 20v4M17 20v4M22 20v4" /></g>,
  bArc: <g fill="none"><path d="M6 28V8l8-4 12 24z" fill="#fff" stroke="#444" strokeWidth="1.6" /><path d="M8 4c12 2 18 10 18 22" stroke="#6d9a35" strokeWidth="2" /></g>,
  bGauge: <g stroke="#444"><circle cx="16" cy="10" r="8" fill="#fff" strokeWidth="1.6" /><circle cx="16" cy="10" r="2" fill="#6d9a35" /><rect x="3" y="22" width="26" height="7" fill="#fff" /><path d="M7 22v3M12 22v3M17 22v3M22 22v3" /></g>,
  bRul: <g stroke="#444"><rect x="8" y="2" width="16" height="18" fill="#fff" /><rect x="8" y="9" width="16" height="4" fill="#6d9a35" /><rect x="3" y="23" width="26" height="6" fill="#fff" /></g>,
  bRul2: <g stroke="#444"><rect x="6" y="2" width="16" height="22" fill="#fff" /><rect x="8" y="5" width="11" height="15" fill="#6d9a35" /><path d="M25 2v26H3" fill="none" strokeWidth="2.4" /></g>,
  bRul3: <g stroke="#444"><rect x="6" y="2" width="16" height="22" fill="#fff" /><rect x="9" y="5" width="10" height="15" fill="#555" strokeDasharray="1 1" /><path d="M25 2v26H3" fill="none" strokeWidth="2.4" /></g>,
  bHexF: <path d="M9 3h13l7 13-7 13H9L3 16z" fill="#e6e6e6" stroke="#bbb" strokeWidth="1.8" />,
  bNote: <g><path d="M6 2h14l6 6v22H6z" fill="#fff" stroke="#444" strokeWidth="2" /><path d="M14 12h4v4h4v4h-4v4h-4v-4h-4v-4h4z" fill="#6d9a35" /></g>,
  /* tile glyphs */
  tCrop: <g fill="none" stroke="#222" strokeWidth="2"><rect x="4" y="4" width="24" height="24" /><path d="M9 9l14 14" strokeWidth="1.4" /><rect x="1" y="1" width="5" height="5" fill="#222" stroke="none" /><rect x="26" y="26" width="5" height="5" fill="#222" stroke="none" /></g>,
  tCirc: <g fill="none" stroke="#333" strokeWidth="2"><circle cx="14" cy="14" r="12" fill="#a8c878" /><circle cx="14" cy="14" r="7" stroke="#d8501a" /></g>,
  tRed: <g><rect x="3" y="2" width="26" height="28" fill="#fff" stroke="#c01830" strokeWidth="2.4" /><g fill="#c01830">{[0, 1, 2, 3].map(r => [0, 1, 2, 3].map(c => <rect key={`${r}${c}`} x={6 + c * 5.2} y={5 + r * 5.6} width="3.2" height="3.2" />))}</g></g>,
  tHeat: <g><rect x="2" y="3" width="22" height="24" fill="#e8a830" stroke="#333" /><path d="M2 14l12-11h10v10L12 27H2z" fill="#2ad033" /><circle cx="22" cy="8" r="6" fill="#999" stroke="#333" /></g>,
  tBar: <g><Rainbow x={11} y={1} w={10} h={4} /></g>,
  tTarget: <g fill="none" stroke="#222" strokeWidth="1.8"><circle cx="15" cy="14" r="10" /><path d="M15 1v26M2 14h26" /></g>,
  tArrows: <path d="M10 30V6M6 11l4-7 4 7M22 30V6M18 11l4-7 4 7" fill="none" stroke="#222" strokeWidth="2.4" />,
  tMix: <g fill="#b8cc88" stroke="#333" strokeWidth="1.4"><rect x="3" y="3" width="11" height="12" rx="3" /><ellipse cx="23" cy="9" rx="6" ry="6" /><rect x="3" y="18" width="11" height="11" fill="#fff" /><path d="M8 18v11M3 23h11" /></g>,
  tMixOff: <g fill="#eee" stroke="#999" strokeWidth="1.4"><rect x="4" y="3" width="12" height="12" rx="3" /><ellipse cx="24" cy="9" rx="6" ry="6" /><rect x="4" y="18" width="12" height="11" /></g>,
  tDots: <g fill="#222"><circle cx="8" cy="6" r="3" /><circle cx="20" cy="6" r="3" /><circle cx="5" cy="17" r="3" /><circle cx="15" cy="14" r="3" /><circle cx="25" cy="16" r="3" /></g>,
  tHex: <path d="M10 3h12l6 10-6 12H10L4 13z" fill="#e0e8ee" stroke="#333" strokeWidth="1.6" />,
  tDiam: <path d="M14 3l12 12-8 8-12-10z" fill="#cfd8d8" stroke="#333" strokeWidth="1.6" />,
  tCube: <g fill="#f2f2f2" stroke="#333" strokeWidth="1.6"><path d="M5 8l5-5h16v20l-5 5H5z" /><path d="M5 8h16v20M21 8l5-5" fill="none" /></g>,
  tLoops: <g fill="none" stroke="#222" strokeWidth="2"><circle cx="10" cy="9" r="6" /><circle cx="20" cy="18" r="6" /></g>,
  tLine: <path d="M6 26L26 4" stroke="#222" strokeWidth="2" strokeDasharray="4 2" />,
  tRound: <g><circle cx="14" cy="14" r="12" fill="#b8cc88" stroke="#222" strokeWidth="1.8" /><circle cx="14" cy="14" r="1.6" fill="#222" /></g>,
  tPane: <g fill="#b8cc88" stroke="#222" strokeWidth="1.8"><rect x="3" y="3" width="24" height="24" /><path d="M15 3v24M3 15h24" /></g>,
  tCyl: <g><path d="M5 6v20h22V6z" fill="#b8cc88" stroke="#222" /><ellipse cx="16" cy="6" rx="11" ry="4" fill="#d8e4b0" stroke="#222" /></g>,
  tTriad: <g strokeWidth="2.8" fill="none"><path d="M8 4v20" stroke="#1a6a20" /><path d="M8 24l16-6" stroke="#1a5ac8" /><path d="M8 24l-5 4" stroke="#c01830" /><path d="M8 1l-3 6h6z" fill="#1a6a20" stroke="none" /></g>,
  tRuler: <g stroke="#222"><rect x="2" y="5" width="28" height="9" fill="#fff" strokeWidth="1.6" /><path d="M6 5v4M10 5v4M14 5v4M18 5v4M22 5v4M26 5v4" /></g>,
  tOval: <g fill="none" stroke="#222" strokeWidth="1.8"><ellipse cx="16" cy="16" rx="9" ry="12" strokeDasharray="4 2" /><circle cx="16" cy="5" r="2" fill="#222" /></g>,
};
const V: React.FC<{ n: string; s?: number }> = ({ n, s = 24 }) => <Ico s={s}>{vb[n]}</Ico>;

/* ---------- the model ---------- */
const Outline = { stroke: "#1b2a1b", vectorEffect: "non-scaling-stroke" as const };
const AirfoilModel: React.FC<{ id: string; sw?: number }> = ({ id, sw = 1 }) => {
  const line = { ...Outline, strokeWidth: sw, fill: "none" };
  const main = "M110 925 C300 800 560 640 760 452 C790 445 830 445 858 468 C960 620 1090 880 1135 1040 L468 1478 C400 1280 280 1020 150 932 Z";
  const clip = `${id}-main`;
  return (
    <g transform="translate(560 300) scale(0.7018 0.3954)">
      <defs><clipPath id={clip}><path d={main} /></clipPath></defs>
      {/* rear body */}
      <path d="M1000 90 C1010 70 1020 55 1035 55 L1440 325 C1420 335 1405 355 1398 372 C1390 400 1375 410 1365 395 C1360 370 1350 335 1340 322 L940 52 Z" fill="#1eaedb" />
      <path d="M1005 92 L1070 150 L1240 255 L1398 372 C1390 405 1372 408 1364 385 C1358 355 1350 332 1340 322 L1000 95 Z" fill="#2ad033" />
      <path d="M1020 65 L1110 130 L1150 190 L1210 215 L1320 290 L1398 340 L1398 368 L1250 268 L1150 195 L1060 135 L1005 90 Z" fill="#22cfe0" />
      <path d="M1170 190 C1190 185 1210 205 1200 218 C1185 225 1165 210 1170 190Z" fill="#1f90c8" />
      <path d="M885 155 C895 125 900 110 905 105 L1300 375 C1290 410 1265 460 1210 478 L1190 395 Z" fill="#2ad033" />
      <path d="M905 105 C915 70 925 52 940 52 L1340 322 C1320 330 1305 360 1300 375 Z" fill="#1eaedb" />
      <path d="M908 100 L915 85 L945 95 L1000 140 L1115 215 L1240 300 L1300 372 Z" fill="#2ad033" />
      <path d="M930 70 L990 110 L1020 150 L1090 175 L1150 240 L1250 290 L1310 345 L1300 372 L1240 320 L1115 228 L1000 155 L925 100 Z" fill="#22cfe0" />
      <path d="M1210 478 C1250 470 1275 440 1290 405" fill="none" stroke="#1a9cd6" strokeWidth={sw * 3} vectorEffect="non-scaling-stroke" />
      <path d="M1205 470 C1240 482 1265 460 1285 420 C1300 375 1310 335 1340 322 C1355 330 1362 355 1368 385 C1375 410 1390 400 1398 372 C1405 350 1425 325 1440 325 C1460 330 1465 350 1465 380 L1478 640 C1478 680 1465 745 1435 745 C1420 745 1415 725 1405 730 C1390 745 1392 790 1385 830 C1375 875 1360 890 1345 890 C1320 885 1310 855 1290 858 C1260 865 1245 905 1230 930 L1210 930 Z" fill="#1a8020" />
      <path d="M1205 470 C1240 482 1265 460 1285 420 C1300 375 1310 335 1340 322 C1352 328 1360 350 1366 385 L1345 395 L1318 450 L1285 535 L1262 555 L1235 530 L1210 490 Z" fill="#1a8fb4" />
      <path d="M1212 480 C1245 482 1270 455 1290 420 C1305 375 1315 345 1340 338 L1348 380 L1312 440 L1280 505 L1260 520 L1240 500 Z" fill="#146a90" />
      <path d="M1440 325 C1460 330 1465 350 1465 380 L1470 640 L1476 640 C1478 680 1465 745 1440 745" fill="none" stroke="#1a8fb4" strokeWidth={sw * 2} vectorEffect="non-scaling-stroke" />
      <path d="M1230 930 C1245 905 1260 865 1290 858 C1310 855 1320 885 1345 890 C1365 885 1380 850 1388 800 L1368 825 L1335 770 L1290 775 L1265 780 L1245 830 Z" fill="#1a8fb4" />
      <path d="M1235 915 C1250 880 1265 858 1290 855 C1310 855 1320 870 1345 875 L1335 820 L1300 795 L1270 805 Z" fill="#146a90" />
      <path d="M1205 470 C1240 482 1265 460 1285 420 C1300 375 1310 335 1340 322 C1355 330 1362 355 1368 385 C1375 410 1390 400 1398 372 C1405 350 1425 325 1440 325 C1460 330 1465 350 1465 380 L1478 640 C1478 680 1465 745 1435 745 C1420 745 1415 725 1405 730 C1390 745 1392 790 1385 830 C1375 875 1360 890 1345 890 C1320 885 1310 855 1290 858 C1260 865 1245 905 1230 930" {...line} />
      <path d="M940 52 L1340 322 M1035 55 L1440 325 M905 105 L1300 375 M1005 92 L1398 372 M885 155 C900 110 915 60 940 52 M1000 90 C1010 70 1020 55 1035 55" {...line} strokeOpacity=".7" />
      {/* mounting plate */}
      <path d="M697 78 L727 55 L1203 375 L1172 398 Z" fill="#2ad033" />
      <path d="M697 78 L1172 398 L1210 1165 L1100 1090 L710 500 Z" fill="#1a7a1f" />
      <path d="M1172 398 L1203 375 L1238 1140 L1210 1165 Z" fill="#1f9a25" />
      <path d="M697 78 L727 55 L1203 375 L1238 1140 L1210 1165 L1100 1090 M1172 398 L1210 1165 M697 78 L1172 398 M697 78 L710 500" {...line} />
      <path d="M935 240 L965 215 L1003 980 L970 1005 Z M968 250 L1003 980" fill="none" stroke="#4f8f2a" strokeWidth={sw * 0.8} vectorEffect="non-scaling-stroke" strokeOpacity=".75" />
      {/* underside + back band */}
      <path d="M468 1480 L1120 1050 L1142 1062 L1100 1090 L468 1497 Z" fill="#1e9526" />
      <path d="M468 1488 L780 1285 L800 1278 L472 1497 Z" fill="#1a9cd6" />
      <path d="M1118 1050 L1140 1045 L1142 1062 L1130 1066 Z" fill="#1eaedb" />
      <path d="M725 490 C735 440 765 385 815 380 C845 380 870 400 885 425 C1000 560 1130 830 1185 1030 C1190 1065 1185 1110 1165 1112 C1145 1105 1135 1065 1130 1040 Z" fill="#e6a029" />
      <path d="M915 495 C950 540 980 590 995 640 L965 610 C945 570 925 530 915 495 Z M1005 615 C1030 650 1050 680 1065 735 L1040 715 C1020 680 1005 650 1005 615 Z M1090 815 C1125 880 1155 960 1168 1015 L1145 1020 C1125 960 1105 880 1090 815 Z" fill="#e8852a" />
      <path d="M888 430 C1000 565 1128 830 1183 1030" fill="none" stroke="#b8902a" strokeWidth={sw * 3} vectorEffect="non-scaling-stroke" />
      <path d="M725 490 C735 440 765 385 815 380 C845 380 870 400 875 415 L858 468 C830 445 790 445 760 462 Z" fill="#c9982a" />
      <path d="M782 395 C810 385 845 395 862 430 L850 455 C825 440 795 440 775 445 Z" fill="#e6a029" />
      <path d="M795 378 L820 372 L830 385 L800 385 Z" fill="#e67823" />
      <path d="M875 415 C880 420 888 430 890 438 L875 440 Z" fill="#1e9526" />
      <path d="M1135 1040 L1180 1020 C1190 1060 1185 1090 1165 1095 C1148 1095 1138 1070 1135 1040 Z" fill="#6a5018" />
      <path d="M725 490 C735 440 765 385 815 380 C845 380 870 400 885 425 C1000 560 1130 830 1185 1030 C1190 1065 1185 1095 1165 1097 C1148 1095 1138 1070 1133 1040 M765 400 C760 430 762 450 760 462 M875 412 C872 435 865 455 858 468 M1133 1040 L1180 1018" {...line} />
      {/* main surface */}
      <path d={main} fill="#2ad033" />
      <g clipPath={`url(#${clip})`}>
        <path d="M430 712 L760 452 L770 470 L500 665 Z" fill="#26ba2c" />
        <path d="M60 960 L420 700 C460 690 510 675 560 700 C600 715 650 690 700 650 C670 720 640 800 625 880 C620 950 630 1010 620 1060 C600 1140 560 1200 520 1250 C490 1290 455 1340 435 1370 L380 1500 L60 1100 Z" fill="#e6d030" />
        <path d="M60 960 L450 695 C490 705 520 715 550 735 C590 735 650 700 700 650 C670 700 620 790 595 850 C585 920 590 1000 580 1060 C565 1120 520 1180 470 1250 C450 1280 430 1320 420 1340 L380 1500 L60 1100 Z" fill="#e6b42d" />
        <path d="M60 960 L370 760 C420 760 445 760 465 795 C485 830 530 820 585 800 C540 870 500 920 475 960 C450 1020 430 1150 410 1280 L380 1500 L60 1100 Z" fill="#e6a029" />
        <path d="M60 960 L290 820 C340 825 370 830 395 870 C420 910 450 915 485 915 L360 1060 C375 1110 385 1150 380 1205 L340 1280 L60 1100 Z" fill="#e68c26" />
        <path d="M60 960 L190 890 C240 880 290 885 315 925 C335 970 340 1020 375 1050 L315 1115 L200 1000 L60 1100 Z" fill="#e67823" />
      </g>
      <path d="M155 932 C300 830 560 650 760 452 M315 1115 L858 468" {...line} />
      <path d="M858 470 C960 622 1088 880 1132 1038" fill="none" stroke="#e6d030" strokeWidth={sw * 2} vectorEffect="non-scaling-stroke" />
      <path d="M110 925 C300 800 560 640 760 452 M1135 1040 L468 1478" {...line} strokeOpacity=".7" />
      {/* leading end */}
      <path d="M52 1000 C58 955 85 925 110 925 C250 960 390 1210 468 1495 C390 1290 250 1030 120 1018 C90 1012 70 1030 52 1000 Z" fill="#84781f" />
      <path d="M60 985 L75 955 L85 965 L95 940 L115 930 L125 945 L145 950 L170 975 L205 1020 L170 1005 L140 1000 L100 1005 L70 1005 Z" fill="#1a7a1f" />
      <path d="M90 1012 C150 1005 230 1060 300 1180 C370 1300 430 1420 468 1495 C400 1340 320 1200 260 1120 C190 1040 130 1025 90 1020 Z" fill="#15669e" />
      <path d="M110 1000 C180 1010 240 1060 300 1160 L315 1185 C265 1110 190 1035 120 1012 Z" fill="#1a7a1f" />
      <path d="M110 925 C250 960 390 1210 468 1495 M52 1000 C58 955 85 925 110 925 M52 1000 C70 1030 90 1012 120 1018 C250 1030 390 1290 468 1495" {...line} />
    </g>
  );
};

/* ---------- data ---------- */
type Btn = { w: number; icon: string; lines: string[]; s?: number; caret?: boolean };
const bandColors = ["#e62d17", "#e63a18", "#e6501c", "#e66520", "#e67823", "#e68c26", "#e6a029", "#e6b42d", "#e6d030", "#e8e832",
  "#2ae0e0", "#22d0e0", "#20b0d8", "#1e9cd6", "#1a80cc", "#1670c8", "#125ac0", "#1048b8", "#0e38b0", "#0c28a8"];
const ticks = [
  { t: "0.0300", y: 0, c: "#111", p: "#111" }, { t: "0.024", y: 52, c: "#555" }, { t: "0.018", y: 106, c: "#555" },
  { t: "0.012", y: 160, c: "#555" }, { t: "0.005", y: 225, c: "#33c23a", p: "#2ad033" }, { t: "0.0000", y: 269, c: "#111", p: "#111" },
  { t: "-0.005", y: 314, c: "#33c23a", p: "#2ad033" }, { t: "-0.01", y: 357, c: "#555" }, { t: "-0.015", y: 402, c: "#555" },
  { t: "-0.02", y: 446, c: "#555" }, { t: "-0.025", y: 491, c: "#555" }, { t: "-0.0300", y: 536, c: "#111", p: "#111" },
];
type R = { lv: number; t: string; i: string; tw?: "o" | "c"; eye?: "on" | "off"; n?: string; sel?: boolean };
const rows: R[] = [
  { lv: 1, t: "Section AA1", i: "sec", eye: "off" }, { lv: 1, t: "Section BB", i: "sec", eye: "off" }, { lv: 1, t: "Section CC", i: "sec", eye: "off" },
  { lv: 0, t: "Alignments", i: "tAlign", tw: "o" }, { lv: 1, t: "Initial Alignment1", i: "tInit" }, { lv: 1, t: "Datum Alignment1", i: "tDatum", eye: "off" },
  { lv: 0, t: "Pairing Map", i: "tPair" }, { lv: 0, t: "Analysis", i: "tAnal", tw: "o", eye: "on" }, { lv: 1, t: "Compare", i: "tComp", tw: "o", eye: "on" },
  { lv: 2, t: 'Color Map Nominal +/-.005" ...', i: "tMap", eye: "on", sel: true }, { lv: 2, t: "Airfoil Deviations", i: "tDev", tw: "c", n: "25", eye: "off" },
  { lv: 1, t: "3D GD&Ts", i: "tGdt", tw: "o", eye: "on" }, { lv: 2, t: "DATUMS", i: "tGdt", tw: "c", n: "3", eye: "on" }, { lv: 1, t: "Cross Section", i: "tCross", eye: "on" },
  { lv: 1, t: "Airfoil", i: "tAirfoil", tw: "o", eye: "on" }, { lv: 2, t: "Section AA", i: "tSecAA", tw: "c", n: "50", eye: "off" }, { lv: 1, t: "Deviation Location", i: "tDevLoc", eye: "on" },
  { lv: 0, t: "Curves", i: "tCurves", eye: "on" }, { lv: 0, t: "Probe Sequence", i: "tProbe", eye: "on" }, { lv: 0, t: "Custom Views", i: "tCam", tw: "o" },
  { lv: 1, t: "#3 - Section AA Maximum Chord ...", i: "tCam" }, { lv: 1, t: "#2 - Section AA Leading Edge Po...", i: "tCam" }, { lv: 1, t: "#5 Section AA Axial Chord Length", i: "tCam" },
  { lv: 1, t: "#1 - Section AA Leading and Trail...", i: "tCam" }, { lv: 1, t: "#4 Section AA Leading, Edge, Tra...", i: "tCam" }, { lv: 1, t: "Custom View1", i: "tCam" },
  { lv: 0, t: "Measurement", i: "tMeas", eye: "on" }, { lv: 0, t: "Note", i: "tNote", eye: "on" },
];
const tabs: [string, number][] = [["LIVE CAPTURE", 106], ["CAD", 48], ["MEASURED", 92], ["ALIGNMENTS", 96], ["COMPARE", 84], ["DIMENSIONS", 96], ["CURVES", 76], ["AUTOMATION", 98], ["TOOLS", 68]];
const tiles = ["tCirc", "tRed", "tHeat", "tBar", "tTarget", "tArrows", "tMix", "tMixOff", "tDots", "tHex", "tDiam", "tCube", "tLoops", "tLine", "tRound", "tPane", "tCyl", "tTriad", "tRuler", "tOval"];
const outlines1 = ["bCube", "bGear", "bCubeG", "bCubeO", "bCubeR", "bCubeS", "bCone", "bConeO", "bCorner", "bCylGrid", "bTarget", "bChev"];
const outlines2 = ["bCal", "bDim", "bArc", "bGauge", "bRul", "bRul2", "bRul3", "bHexF", "bNote"];

const BigButton: React.FC<Btn> = ({ w, icon, lines, s = 33, caret }) => (
  <RibbonBtn $w={w}>
    <BtnIcon><I n={icon} s={s} /></BtnIcon>
    <BtnText>{lines.map((l, i) => <span key={l}>{l}{caret && i === lines.length - 1 && <Caret />}</span>)}</BtnText>
  </RibbonBtn>
);
const Small: React.FC<{ w: number; list: string[]; s?: number }> = ({ w, list, s = 18 }) => (
  <SmallCol $w={w}>{list.map(n => <I key={n} n={n} s={s} />)}</SmallCol>
);
const ThreeTwoOne = styled.span`font-size: 12px; font-weight: bold; line-height: 13px; color: #111; position: absolute; left: 0; top: 1px; letter-spacing: 2px; white-space: pre;`;
const IconWrap = styled.span`position: relative; display: block;`;

const VB: React.FC<{ n: string; w?: number }> = ({ n, w = 26.7 }) => <ViewBtn $w={w}><V n={n} s={22} /></ViewBtn>;

export default function App() {
  return (
    <Page>
      <GlobalStyle />
      <TitleBar>
        <Qat>
          <AppLogo>Cx</AppLogo>
          {[["docBlank", 22], ["docIn", 22], ["save", 23], ["folderIn", 22], ["folderUp", 22], ["folderGear", 22], ["undo", 24], ["redo", 22]].map(([n, w]) => (
            <QatBtn key={n as string} $w={w as number}><I n={n as string} s={17} /></QatBtn>
          ))}
          <Drop />
        </Qat>
        <TitleText>Airfoil Example.CXProj - Geomagic Control X 2023. 1. 0 [Professional] [Not for Resale]</TitleText>
        <WinControls>
          <WinBtn><I n="minus" s={11} /></WinBtn>
          <WinBtn><I n="restore" s={11} /></WinBtn>
          <WinBtn><I n="xd" s={11} /></WinBtn>
        </WinControls>
      </TitleBar>
      <TabBar>
        <MenuTab>MENU</MenuTab>
        <HomeTab>HOME</HomeTab>
        {tabs.map(([t, w]) => <TabLabel key={t} $w={w}>{t}</TabLabel>)}
      </TabBar>
      <Ribbon>
        <RibbonGroup $w={135}>
          <GroupBody>
            <BigButton w={50} icon="importI" lines={["Import"]} />
            <BigButton w={76} icon="replace" lines={["Replace", "Measured Data"]} />
          </GroupBody>
          <GroupLabel>Import</GroupLabel>
        </RibbonGroup>
        <RibbonGroup $w={385}>
          <GroupBody $pad={7}>
            <BigButton w={58} icon="initial" lines={["Initial", "Alignment"]} />
            <BigButton w={58} icon="bestfit" lines={["Best Fit", "Alignment"]} />
            <BigButton w={58} icon="rps" lines={["RPS", "Alignment"]} />
            <BigButton w={58} icon="datum" lines={["Datum", "Alignment"]} />
            <RibbonBtn $w={58}>
              <BtnIcon><IconWrap><I n="three21" s={33} /><ThreeTwoOne>{"3 2\n   1"}</ThreeTwoOne></IconWrap></BtnIcon>
              <BtnText><span>3-2-1</span><span>Alignment</span></BtnText>
            </RibbonBtn>
            <BigButton w={58} icon="transform" lines={["Transform", "Alignment"]} />
            <Small w={22} list={["alignS1", "alignS2", "alignS3"]} />
          </GroupBody>
          <GroupLabel>Alignment</GroupLabel>
        </RibbonGroup>
        <RibbonGroup $w={245}>
          <GroupBody $pad={4}>
            <BigButton w={56} icon="comp3d" lines={["3D", "Compare"]} />
            <BigButton w={56} icon="comp2d" lines={["2D", "Compare"]} caret />
            <BigButton w={72} icon="compPt" lines={["Comparison", "Point"]} />
            <Small w={22} list={["csMesh", "csCube", "csPerson"]} s={17} />
            <Small w={26} list={["csCyl", "csDots", "csHex"]} s={17} />
          </GroupBody>
          <GroupLabel>Compare</GroupLabel>
        </RibbonGroup>
        <RibbonGroup $w={395}>
          <GroupBody>
            <BigButton w={52} icon="point" lines={["Point"]} />
            <BigButton w={56} icon="cmm" lines={["Simulated", "CMM Point"]} />
            <BigButton w={46} icon="vector" lines={["Vector"]} />
            <BigButton w={42} icon="circleI" lines={["Circle"]} />
            <Small w={20} list={["slot", "square", "penta"]} s={19} />
            <RibbonSep />
            <BigButton w={44} icon="plane" lines={["Plane"]} s={34} />
            <BigButton w={47} icon="cyl" lines={["Cylinder"]} s={34} />
            <BigButton w={44} icon="sphere" lines={["Sphere"]} s={34} />
            <Small w={22} list={["cone", "torus", "triadS"]} s={17} />
          </GroupBody>
          <GroupLabel>Constructed Geometry</GroupLabel>
        </RibbonGroup>
        <RibbonGroup $w={115}>
          <GroupBody $pad={5}>
            <BigButton w={54} icon="genRep" lines={["Generate", "Report"]} s={36} />
            <BigButton w={48} icon="repMgr" lines={["Report", "Manager"]} s={36} />
          </GroupBody>
          <GroupLabel>Report</GroupLabel>
        </RibbonGroup>
        <RibbonGroup $w={75}>
          <GroupBody><BigButton w={74} icon="regen" lines={["Regenerate", "All"]} s={36} /></GroupBody>
          <GroupLabel>Regen</GroupLabel>
        </RibbonGroup>
        <RibbonFill><FillBody /><FillLabel /></RibbonFill>
      </Ribbon>
      <Main>
        <LeftPanel>
          <PanelHead>
            <PanelHeadTitle>Model Manager</PanelHeadTitle>
            <PanelHeadBtn><I n="pin" s={11} /></PanelHeadBtn>
            <PanelHeadBtn><I n="x" s={11} /></PanelHeadBtn>
          </PanelHead>
          <PanelTabs>
            <PanelTabActive><I n="tabMM" s={16} />Model Manager</PanelTabActive>
            <PanelTab><I n="help" s={16} />Help</PanelTab>
          </PanelTabs>
          <PanelWhite>
            <AccHead>Input Data</AccHead>
            <AccHead>Scan Process</AccHead>
            <AccHead $on>Result Data - 1</AccHead>
            <TreeArea>
              <TreeList>
                {rows.map(r => (
                  <Row key={r.t} $sel={r.sel}>
                    <Twist $left={r.lv * 18 - 2}>{r.tw && <Twisty open={r.tw === "o"} />}</Twist>
                    <RowIcon>{r.i === "sec" ? <Ico s={15}><SectionGrid /></Ico> : <I n={r.i} s={15} />}</RowIcon>
                    <RowText>{r.t}</RowText>
                    <RowCount>{r.n}</RowCount>
                    <RowEye>{r.eye === "on" ? <EyeOn /> : r.eye === "off" ? <EyeOff /> : null}</RowEye>
                  </Row>
                ))}
              </TreeList>
              <Scroll>
                <ScrollBtn><Ico s={9} vb="0 0 10 10"><path d="M0 7h10L5 2z" fill="#555" /></Ico></ScrollBtn>
                <ScrollTop />
                <ScrollThumb />
                <ScrollEnd />
                <ScrollBtn><Ico s={9} vb="0 0 10 10"><path d="M0 3h10L5 8z" fill="#555" /></Ico></ScrollBtn>
              </Scroll>
            </TreeArea>
            <AccHead>Result Navigator</AccHead>
            <NavBar />
            <CamBar>
              <I n="camAdd" s={20} /><I n="camChk" s={20} /><I n="camOff" s={20} /><I n="camArr" s={20} />
            </CamBar>
            <ThumbArea>
              <Thumb>
                <svg width="130" height="129" viewBox="559 17 1082 1074"><AirfoilModel id="thumb" sw={0.4} /></svg>
                <ThumbScale />
              </Thumb>
            </ThumbArea>
          </PanelWhite>
        </LeftPanel>
        <Center>
          <Viewport>
            <ModelSvg viewBox="295 146 1619 811">
              <AirfoilModel id="main" />
              <text x="1177" y="378" fontSize="10" fill="#4f8f2a" fontFamily="Liberation Sans" opacity=".75">DATUM A</text>
              <path d="M404 867 L612 703" stroke="#fb1c1c" strokeWidth="7" />
              <path d="M625 693 L598 699 L615 718 Z" fill="#fb1c1c" />
              {/* triad */}
              <path d="M333 916 V892" stroke="#2ecc40" strokeWidth="2" />
              <path d="M333 916 L318 925" stroke="#1a2acc" strokeWidth="2.4" />
              <path d="M333 916 L347 921" stroke="#cc2a2a" strokeWidth="2" />
              <text x="329" y="892" fontSize="11" fill="#2e9c40" fontFamily="Liberation Sans">Y</text>
              <text x="311" y="931" fontSize="12" fill="#1a2acc" fontFamily="Liberation Sans">Z</text>
              <text x="347" y="929" fontSize="11" fill="#a83232" fontFamily="Liberation Sans">X</text>
            </ModelSvg>
            <ViewBar>
              <VB n="hex" /><MiniDrop /><ViewBtn $w={6} />
              <VB n="cube" w={22} /><MiniDrop /><ViewSep $r={9} />
              <VB n="cubeG" /><MiniDrop /><ViewBtn $w={6} />
              <VB n="vL" /><VB n="vR" /><VB n="vPair" /><VB n="vUp" /><ViewSep $r={3} />
              <VB n="grid6" /><VB n="greenSel" /><ViewSep $r={3} />
              <VB n="fLine" /><VB n="greenBox" /><VB n="fCirc" /><VB n="fCirc" /><VB n="fBlob" /><VB n="fLasso" /><VB n="fBrush" /><VB n="fDia1" /><VB n="fDia2" /><VB n="fDia3" /><VB n="fEye" />
            </ViewBar>
            <CornerMark />
            <ScaleBar />
            <ScaleLabel>0.25 in.</ScaleLabel>
            <Legend>
              <LegendCap $c="#fb1c1c" />
              <LegendBands>
                {bandColors.map(c => <Band key={c} $c={c} />)}
                <TolBox />
                {ticks.map(k => (
                  <React.Fragment key={k.t}>
                    <Tick $c={k.c} style={{ top: k.y }}>{k.t}</Tick>
                    {k.p && <Pointer $c={k.p} style={{ top: k.y }} />}
                  </React.Fragment>
                ))}
              </LegendBands>
              <LegendCap $c="#0000f5" />
            </Legend>
          </Viewport>
          <TabRow>
            <Ico s={9} vb="0 0 10 10"><path d="M8 1L2 5l6 4z" fill="#888" /></Ico>
            <ModelTab>Model View</ModelTab>
            <TabRowFill />
            <TabRowBtn><Ico s={9} vb="0 0 10 10"><path d="M2 1l6 4-6 4z" fill="none" stroke="#777" /></Ico></TabRowBtn>
            <TabRowBtn><I n="xd" s={10} /></TabRowBtn>
            <TabRowBtn $boxed><Ico s={11} vb="0 0 10 10"><path d="M1 3h4V0l5 5-5 5V7H1z" fill="#222" /></Ico></TabRowBtn>
            <TabRowBtn $boxed><Ico s={9} vb="0 0 10 10"><path d="M0 2h10L5 8z" fill="#222" /></Ico></TabRowBtn>
          </TabRow>
          <GapRow />
          <TabHead>
            <TabHeadTitle>Tabular View - Datum Alignment Tag (Auto)</TabHeadTitle>
            <TabHeadBtn><Ico s={9} vb="0 0 10 10"><path d="M0 2h10L5 8z" fill="#eee" /></Ico></TabHeadBtn>
            <TabHeadBtn><I n="pin" s={11} /></TabHeadBtn>
            <TabHeadBtn><I n="x" s={11} /></TabHeadBtn>
          </TabHead>
          <TabStub />
        </Center>
        <RightRail>
          <RailItem>
            <Ico s={16}><g fill="#a9bcd0" stroke="#456"><rect x="2" y="4" width="14" height="10" /><rect x="12" y="2" width="14" height="18" fill="#c8d4e0" /><rect x="8" y="14" width="22" height="14" fill="#8a9aac" /></g></Ico>
            <RailText>Properties</RailText>
          </RailItem>
          <RailItem>
            <Ico s={16}><g stroke="#345"><rect x="3" y="4" width="26" height="19" fill="#6a86aa" /><rect x="6" y="7" width="20" height="13" fill="#cfe0ef" /><path d="M2 27h28" strokeWidth="3" /></g></Ico>
            <RailText>Display</RailText>
          </RailItem>
          <RailBar $top={8} $h={75} />
          <RailBar $top={89} $h={59} />
        </RightRail>
      </Main>
      <BottomBar>
        <GreenTile><V n="tCrop" s={18} /></GreenTile>
        <BarDots $m={1} />
        <SelectBox $w={46}>Auto<SelectArrow /></SelectBox>
        <SelectBox $w={47}>Autc<SelectArrow /></SelectBox>
        <BarDots $m={3.5} />
        {tiles.map(t => (
          <GreenTile key={t} $off={t === "tMixOff"}>
            <V n={t} s={18} />
            <TileEye><TileEyeIco /></TileEye>
          </GreenTile>
        ))}
        <Drop />
        <BarDots $m={8} />
        {outlines1.map(n => <OutlineBtn key={n} $w={26.2}><V n={n} s={20} /></OutlineBtn>)}
        <BarDots $m={3} />
        <OutlineBtn $w={22}><V n="bFade" s={20} /></OutlineBtn>
        <Drop />
        <BarDots $m={9} />
        {outlines2.map(n => <OutlineBtn key={n} $w={26.3}><V n={n} s={20} /></OutlineBtn>)}
        <Drop />
      </BottomBar>
    </Page>
  );
}
